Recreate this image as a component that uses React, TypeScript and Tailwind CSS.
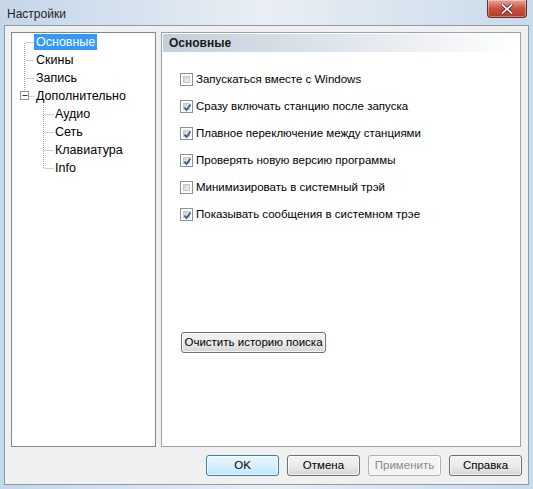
import React from 'react';

type TreeNode = {
  label: string;
  level: 1 | 2;
  kind: 'first' | 'mid' | 'last' | 'parent';
  selected?: boolean;
};

const treeNodes: TreeNode[] = [
  { label: 'Основные', level: 1, kind: 'first', selected: true },
  { label: 'Скины', level: 1, kind: 'mid' },
  { label: 'Запись', level: 1, kind: 'mid' },
  { label: 'Дополнительно', level: 1, kind: 'parent' },
  { label: 'Аудио', level: 2, kind: 'mid' },
  { label: 'Сеть', level: 2, kind: 'mid' },
  { label: 'Клавиатура', level: 2, kind: 'mid' },
  { label: 'Info', level: 2, kind: 'last' },
];

const options = [
  { label: 'Запускаться вместе с Windows', checked: false },
  { label: 'Сразу включать станцию после запуска', checked: true },
  { label: 'Плавное переключение между станциями', checked: true },
  { label: 'Проверять новую версию программы', checked: true },
  { label: 'Минимизировать в системный трэй', checked: false },
  { label: 'Показывать сообщения в системном трэе', checked: true },
];

const Connector: React.FC<{ node: TreeNode }> = ({ node }) => {
  const x = node.level === 1 ? 12.5 : 31.5;
  const w = node.level === 1 ? 24 : 43;
  const stubEnd = node.level === 1 ? 22 : 42;
  const dots = { stroke: '#a0a0a0', strokeWidth: 1, strokeDasharray: '1 1' };
  return (
    <svg width={w} height={18} className="shrink-0">
      {node.kind === 'first' && <line x1={x} y1={10} x2={x} y2={18} {...dots} />}
      {node.kind === 'mid' && <line x1={x} y1={0} x2={x} y2={18} {...dots} />}
      {(node.kind === 'last' || node.kind === 'parent') && (
        <line x1={x} y1={0} x2={x} y2={node.kind === 'parent' ? 5 : 9} {...dots} />
      )}
      {node.kind === 'parent' ? (
        <>
          <rect x={x - 4} y={4.5} width={8} height={8} fill="#fff" stroke="#919191" />
          <line x1={x - 2} y1={8.5} x2={x + 3} y2={8.5} stroke="#333" />
          <line x1={x + 5} y1={9.5} x2={stubEnd} y2={9.5} {...dots} />
        </>
      ) : (
        <line x1={x + 1} y1={9.5} x2={stubEnd} y2={9.5} {...dots} />
      )}
    </svg>
  );
};

const Checkbox: React.FC<{ checked: boolean }> = ({ checked }) => (
  <div className="w-[13px] h-[13px] border border-[#8e8f8f] bg-white p-[2px] shrink-0">
    <div className="w-full h-full border border-[#c6c6c6] bg-gradient-to-br from-[#cfcfcf] to-[#f6f6f6] relative">
      {checked && (
        <svg width="9" height="9" viewBox="0 0 9 9" className="absolute -left-[1px] -top-[1px]">
          <path d="M1.5 4.5 L3.5 7 L7.5 1.5" fill="none" stroke="#3b5a90" strokeWidth="1.8" />
        </svg>
      )}
    </div>
  </div>
);

const WinButton: React.FC<{ label: string; variant?: 'default' | 'normal' | 'disabled'; className?: string }> = ({
  label,
  variant = 'normal',
  className = '',
}) => {
  const styles =
    variant === 'default'
      ? 'border-[#3c7fb1] bg-gradient-to-b from-[#eaf6fd] via-[#d9f0fc] to-[#bee6fd] text-black'
      : variant === 'disabled'
      ? 'border-[#adb2b5] bg-[#f4f4f4] text-[#8a8a8a]'
      : 'border-[#707070] bg-gradient-to-b from-[#f2f2f2] via-[#ebebeb] to-[#d5d5d5] text-black';
  return (
    <div
      className={`h-[21px] rounded-[3px] border flex items-center justify-center whitespace-nowrap text-[11.5px] shadow-[inset_0_0_0_1px_rgba(255,255,255,0.7)] ${styles} ${className}`}
    >
      {label}
    </div>
  );
};

export default function App() {
  return (
    <div
      className="w-[533px] h-[489px] overflow-hidden flex flex-col bg-gradient-to-r from-[#c4d6e9] via-[#e9eef4] to-[#c9daea]"
      style={{ fontFamily: '"Liberation Sans", Arial, sans-serif' }}
    >
      {/* title bar */}
      <div className="h-[25px] shrink-0 flex items-start justify-between pl-[7px] pr-[6px]">
        <span className="text-[12px] text-[#1e1e1e] mt-[5px]">Настройки</span>
        <div className="w-[40px] h-[18px] rounded-b-[4px] border border-t-0 border-[#6b2e2e] bg-gradient-to-b from-[#e8a598] via-[#c9503f] to-[#b8392b] flex items-center justify-center shadow-[inset_0_0_0_1px_rgba(255,255,255,0.35)]">
          <svg width="12" height="10" viewBox="0 0 12 10">
            <path d="M1.5 1 L10.5 9 M10.5 1 L1.5 9" stroke="#4a1f1a" strokeWidth="3.2" strokeLinecap="square" />
            <path d="M1.5 1 L10.5 9 M10.5 1 L1.5 9" stroke="#ffffff" strokeWidth="1.8" strokeLinecap="square" />
          </svg>
        </div>
      </div>

      {/* client */}
      <div className="mx-[4px] h-[460px] border border-[#8c9bab] bg-[#f0f0f0] flex flex-col">
        <div className="flex gap-[5px] pl-[6px] pt-[6px] h-[421px]">
          {/* tree */}
          <div className="w-[145px] h-full border border-[#828790] bg-white">
            {treeNodes.map((n) => (
              <div key={n.label} className="h-[18px] flex items-center">
                <Connector node={n} />
                <span
                  className={`text-[12.5px] leading-[16px] px-[2px] -ml-[2px] ${
                    n.selected ? 'bg-[#3399ff] text-white' : 'text-black'
                  }`}
                >
                  {n.label}
                </span>
              </div>
            ))}
          </div>

          {/* page */}
          <div className="w-[360px] h-full border border-[#a0a0a0] bg-white p-[1px] flex flex-col">
            <div className="h-[18px] bg-gradient-to-r from-[#c3cfdb] via-[#dfe6ed] to-white flex items-center pl-[6px]">
              <span className="text-[12px] font-bold text-[#1a1a1a]">Основные</span>
            </div>
            <div className="pl-[17px] pt-[21px] flex flex-col gap-[14px]">
              {options.map((o) => (
                <div key={o.label} className="h-[13px] flex items-center gap-[3px]">
                  <Checkbox checked={o.checked} />
                  <span className="text-[11.5px] text-black leading-none whitespace-nowrap">{o.label}</span>
                </div>
              ))}
            </div>
            <div className="pl-[18px] mt-[111px]">
              <WinButton label="Очистить историю поиска" className="w-[145px]" />
            </div>
          </div>
        </div>

        {/* footer buttons */}
        <div className="flex justify-end gap-[8px] pr-[6px] pt-[8px]">
          <WinButton label="OK" variant="default" className="w-[73px]" />
          <WinButton label="Отмена" className="w-[73px]" />
          <WinButton label="Применить" variant="disabled" className="w-[73px]" />
          <WinButton label="Справка" className="w-[73px]" />
        </div>
      </div>
    </div>
  );
}
